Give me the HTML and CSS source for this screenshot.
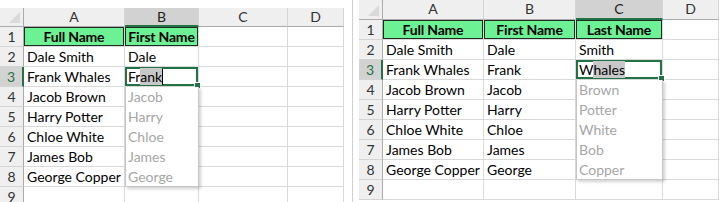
FILE: index.html
```html
<!DOCTYPE html>
<html lang="en">
<head>
    <meta charset="UTF-8">
    <title>Flash Fill</title>
    <link rel="stylesheet" href="styles.css">
</head>
<body>
    <div class="page">
        <!-- first split: first names -->
        <div class="sheet sheet-left">
            <div class="corner"></div>
            <div class="colhead">A</div>
            <div class="colhead sel">B</div>
            <div class="colhead">C</div>
            <div class="colhead">D</div>

            <div class="rowhead">1</div>
            <div class="cell hdr">Full Name</div>
            <div class="cell hdr">First Name</div>
            <div class="cell"></div>
            <div class="cell"></div>

            <div class="rowhead">2</div>
            <div class="cell">Dale Smith</div>
            <div class="cell">Dale</div>
            <div class="cell"></div>
            <div class="cell"></div>

            <div class="rowhead sel-row">3</div>
            <div class="cell">Frank Whales</div>
            <div class="cell active">Fr<span class="mark">ank</span><span class="caret"></span></div>
            <div class="cell"></div>
            <div class="cell"></div>

            <div class="suggest">
                <div>Jacob</div>
                <div>Harry</div>
                <div>Chloe</div>
                <div>James</div>
                <div>George</div>
            </div>

            <div class="rowhead">4</div>
            <div class="cell">Jacob Brown</div>
            <div class="cell"></div>
            <div class="cell"></div>

            <div class="rowhead">5</div>
            <div class="cell">Harry Potter</div>
            <div class="cell"></div>
            <div class="cell"></div>

            <div class="rowhead">6</div>
            <div class="cell">Chloe White</div>
            <div class="cell"></div>
            <div class="cell"></div>

            <div class="rowhead">7</div>
            <div class="cell">James Bob</div>
            <div class="cell"></div>
            <div class="cell"></div>

            <div class="rowhead">8</div>
            <div class="cell">George Copper</div>
            <div class="cell"></div>
            <div class="cell"></div>

            <div class="rowhead">9</div>
            <div class="cell"></div>
            <div class="cell"></div>
            <div class="cell"></div>
            <div class="cell"></div>
        </div>

        <div class="divider"></div>

        <!-- second split: last names -->
        <div class="sheet sheet-right">
            <div class="corner"></div>
            <div class="colhead">A</div>
            <div class="colhead">B</div>
            <div class="colhead sel">C</div>
            <div class="colhead">D</div>

            <div class="rowhead">1</div>
            <div class="cell hdr">Full Name</div>
            <div class="cell hdr">First Name</div>
            <div class="cell hdr">Last Name</div>
            <div class="cell"></div>

            <div class="rowhead">2</div>
            <div class="cell">Dale Smith</div>
            <div class="cell">Dale</div>
            <div class="cell">Smith</div>
            <div class="cell"></div>

            <div class="rowhead sel-row">3</div>
            <div class="cell">Frank Whales</div>
            <div class="cell">Frank</div>
            <div class="cell active">W<span class="mark">hales</span></div>
            <div class="cell"></div>

            <div class="suggest">
                <div>Brown</div>
                <div>Potter</div>
                <div>White</div>
                <div>Bob</div>
                <div>Copper</div>
            </div>

            <div class="rowhead">4</div>
            <div class="cell">Jacob Brown</div>
            <div class="cell">Jacob</div>
            <div class="cell"></div>

            <div class="rowhead">5</div>
            <div class="cell">Harry Potter</div>
            <div class="cell">Harry</div>
            <div class="cell"></div>

            <div class="rowhead">6</div>
            <div class="cell">Chloe White</div>
            <div class="cell">Chloe</div>
            <div class="cell"></div>

            <div class="rowhead">7</div>
            <div class="cell">James Bob</div>
            <div class="cell">James</div>
            <div class="cell"></div>

            <div class="rowhead">8</div>
            <div class="cell">George Copper</div>
            <div class="cell">George</div>
            <div class="cell"></div>

            <div class="rowhead">9</div>
            <div class="cell"></div>
            <div class="cell"></div>
            <div class="cell"></div>
            <div class="cell"></div>
        </div>
    </div>
</body>
</html>
```

FILE: styles.css
```css
body {
    margin: 0;
    background: #fff;
    font-family: Lato, "Open Sans", sans-serif;
    font-size: 14px;
    color: #000;
    overflow: hidden;
}
.page {
    display: flex;
    height: 202px;
    overflow: hidden;
}
.sheet {
    display: grid;
    grid-auto-rows: 20px;
    align-content: start;
}
.sheet-left {
    width: 344px;
    padding-top: 8px;
    grid-template-columns: 24px 101px 74px 89px 56px;
    grid-template-rows: 19px;
}
.sheet-right {
    flex: 1;
    grid-template-columns: 24px 101px 92px 87px 1fr;
    grid-template-rows: 20px;
}
.divider {
    width: 6px;
    margin-left: 8px;
    border-left: 1px solid #d0d0d0;
}
.sheet > div {
    box-sizing: border-box;
}
.corner {
    background: #efefef;
    border-right: 1px solid #ababab;
    border-bottom: 1px solid #ababab;
    position: relative;
}
.corner::after {
    content: "";
    position: absolute;
    right: 3px;
    bottom: 3px;
    border-left: 11px solid transparent;
    border-bottom: 11px solid #dadada;
}
.colhead {
    background: #efefef;
    color: #333;
    text-align: center;
    line-height: 18px;
    border-right: 1px solid #d4d4d4;
    border-bottom: 1px solid #ababab;
}
.colhead.sel {
    background: #d2d2d2;
    color: #222;
    border-bottom: 2px solid #217346;
}
.rowhead {
    background: #efefef;
    color: #333;
    text-align: center;
    line-height: 19px;
    border-right: 1px solid #ababab;
    border-bottom: 1px solid #d4d4d4;
}
.rowhead.sel-row {
    background: #d2d2d2;
    color: #217346;
    border-right: 2px solid #217346;
}
.cell {
    padding-left: 3px;
    line-height: 19px;
    white-space: nowrap;
    overflow: hidden;
    border-right: 1px solid #d9d9d9;
    border-bottom: 1px solid #d9d9d9;
}
.cell.hdr {
    background: #6cf294;
    font-weight: bold;
    text-align: center;
    padding-left: 0;
    letter-spacing: -0.2px;
    box-shadow: inset 0 0 0 1px #1f2a22;
}
.cell.active {
    position: relative;
    box-shadow: inset 0 0 0 2px #217346;
    overflow: visible;
}
.cell.active::after {
    content: "";
    position: absolute;
    right: -3px;
    bottom: -3px;
    width: 5px;
    height: 5px;
    background: #217346;
    border: 1px solid #fff;
}
.mark {
    background: #c8c8c8;
}
.caret {
    display: inline-block;
    width: 1px;
    height: 16px;
    background: #000;
    vertical-align: -3px;
}
.suggest {
    grid-column: 3;
    grid-row: 5 / span 5;
    height: 100px;
    position: relative;
    z-index: 1;
    background: #fff;
    border: 1px solid #c6c6c6;
    border-top: none;
    box-shadow: 2px 2px 3px rgba(0, 0, 0, 0.18);
    color: #a6a6a6;
}
.sheet-right .suggest {
    grid-column: 4;
}
.suggest div {
    height: 20px;
    line-height: 19px;
    padding-left: 2px;
}
```
